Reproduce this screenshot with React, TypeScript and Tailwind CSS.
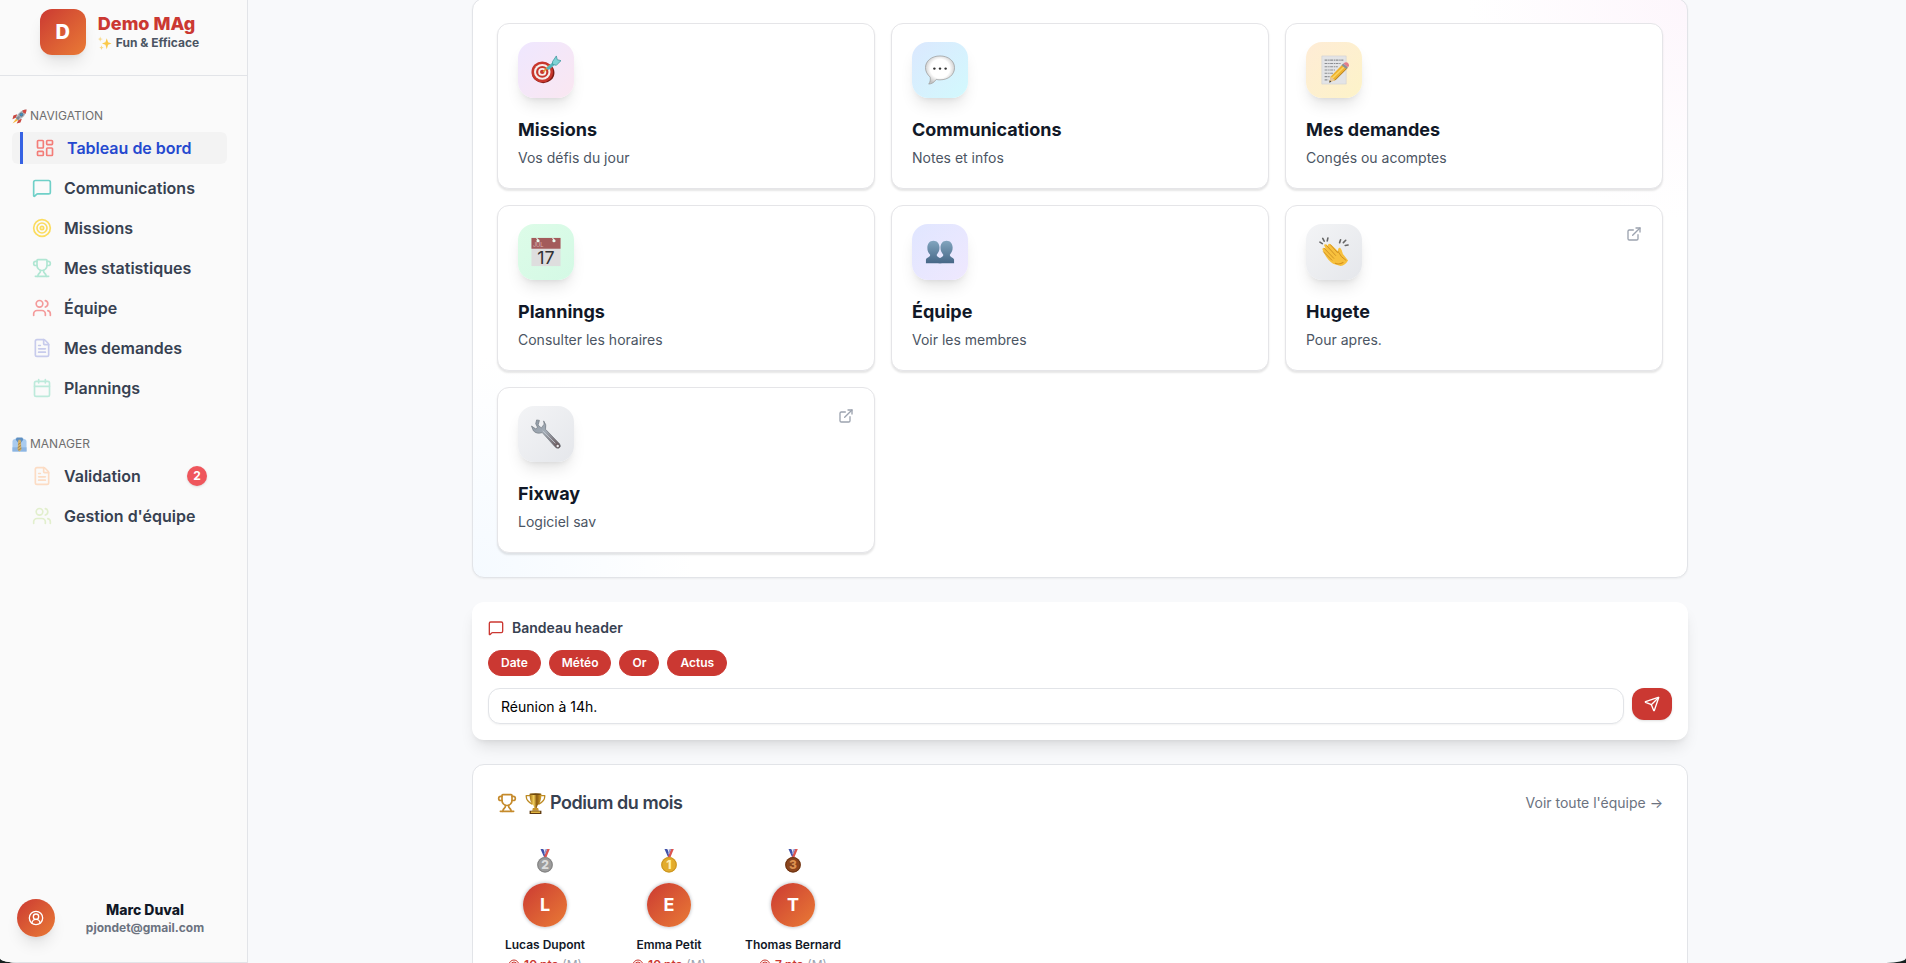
import React, { useState } from 'react';
import {
  LayoutDashboard,
  MessageSquare,
  Target,
  Trophy,
  Users,
  FileText,
  Calendar,
  ExternalLink,
  Send,
  CircleUserRound,
} from 'lucide-react';

/* --- PICTOGRAMS --- */
const Sparkles = () => (
  <svg viewBox="0 0 32 32" className="w-[14px] h-[14px] shrink-0">
    <path d="M20 5 L23 14 L31 17 L23 20 L20 30 L17 20 L9 17 L17 14 Z" fill="#fbc94a" />
    <path d="M5 1 L6.500 5.500 L11 7 L6.500 8.500 L5 13 L3.500 8.500 L0 7 L3.500 5.500 Z" fill="#f8d88a" />
    <path d="M8 21 L9.500 25 L13 26.500 L9.500 28 L8 32 L6.500 28 L3 26.500 L6.500 25 Z" fill="#f8d88a" />
  </svg>
);

const Rocket = () => (
  <svg viewBox="0 0 32 32" className="w-[15px] h-[15px] shrink-0">
    <path d="M9 20 L1 31 L13 24 Z" fill="#f6b63a" />
    <path d="M11 11 L3 14 L1 22 L9 18 Z M21 21 L18 29 L10 31 L14 23 Z" fill="#c9473f" />
    <path d="M31 1 C20 2 13 8 8 19 L13 24 C24 19 30 12 31 1 Z" fill="#aab4bd" />
    <path d="M31 1 C28 1 25 2 22 3 C23 7 25 9 29 10 C30 7 31 4 31 1 Z" fill="#d34a42" />
    <circle cx="20" cy="12" r="3.500" fill="#3d8fc4" stroke="#5c6871" strokeWidth="1.500" />
    <path d="M8 19 L13 24 L17 17 L15 15 Z" fill="#7d8790" />
  </svg>
);

const Necktie = () => (
  <svg viewBox="0 0 32 32" className="w-[15px] h-[15px] shrink-0">
    <path d="M1 9 Q1 5 6 4 L10 2 H22 L26 4 Q31 5 31 9 V31 H1 Z" fill="#a9cbef" />
    <path d="M1 22 H31 V31 H1 Z" fill="#8db5e2" />
    <path d="M10 1 H22 L24 6 L19 12 L16 7 L13 12 L8 6 Z" fill="#5e8fc2" />
    <path d="M14 6 H18 L19 10 L20 27 L16 31 L12 27 L13 10 Z" fill="#d4b168" />
    <path d="M13 16 L19 12 M12 23 L19 18 M13 28 L20 24" stroke="#8c7446" strokeWidth="1.500" />
  </svg>
);

const Dart = () => (
  <svg viewBox="0 0 32 32" className="w-[30px] h-[30px]">
    <ellipse cx="13" cy="19" rx="12" ry="11" fill="#7e1c16" />
    <ellipse cx="12" cy="18" rx="11.500" ry="11" fill="#c8372d" />
    <ellipse cx="12" cy="18" rx="8.800" ry="8.400" fill="#f6efec" />
    <ellipse cx="12" cy="18" rx="6.600" ry="6.300" fill="#c8372d" />
    <ellipse cx="12" cy="18" rx="4.300" ry="4.100" fill="#f6efec" />
    <ellipse cx="12" cy="18" rx="2.400" ry="2.300" fill="#c8372d" />
    <path d="M13 18 L20 11" stroke="#d99b2f" strokeWidth="1.600" />
    <path d="M16 14 L26 5 L28 8 L19 16 Z" fill="#56b7bd" />
    <path d="M23 7 L27 1 L28 5 L32 6 L27 11 L23 10 Z" fill="#7fd3d6" stroke="#3b949b" strokeWidth="0.800" />
  </svg>
);

const Bubble = () => (
  <svg viewBox="0 0 32 32" className="w-[30px] h-[30px]">
    <defs>
      <radialGradient id="bubble" cx="0.5" cy="0.45" r="0.55">
        <stop offset="0.6" stopColor="#ffffff" />
        <stop offset="1" stopColor="#c4c4c4" />
      </radialGradient>
    </defs>
    <path
      d="M16 1 C25 1 31.500 6.500 31.500 13.500 C31.500 21 25 26.500 16 26.500 C14.500 26.500 13 26.400 12 26 C10 29 7 31 4 31 C5.500 29 6 26.500 5.500 23.500 C2.500 21 0.500 17.500 0.500 13.500 C0.500 6.500 7 1 16 1 Z"
      fill="url(#bubble)"
      stroke="#9d9d9d"
      strokeWidth="0.800"
    />
    <circle cx="10" cy="14.500" r="1.300" fill="#333" />
    <circle cx="16" cy="14.500" r="1.300" fill="#333" />
    <circle cx="22" cy="14.500" r="1.300" fill="#333" />
  </svg>
);

const Memo = () => (
  <svg viewBox="0 0 32 32" className="w-[30px] h-[30px]">
    <path d="M3 1 H29 V31 H3 Z" fill="#e3e4e6" stroke="#cfd0d3" strokeWidth="0.600" />
    <path
      d="M6 5.500 H26 M6 9 H23 M6 12.500 H20 M6 16 H17 M6 19.500 H15 M6 23 H12 M6 26.500 H10"
      stroke="#8b8d91"
      strokeWidth="1.200"
      strokeDasharray="3 0.800 1.500 0.600"
    />
    <path d="M11 29 L12.500 23 L25 10 L30 14 L17 27 Z" fill="#eeb12f" />
    <path d="M14 25 L27.500 12" stroke="#f9d461" strokeWidth="1.800" />
    <path d="M17 27 L30 14" stroke="#a97416" strokeWidth="1" />
    <path d="M11 29 L12.500 23 L17 27 Z" fill="#e6c698" />
    <path d="M11 29.500 L11.500 27 L13 28.500 Z" fill="#333" />
    <path d="M24 11 L26 9 L31 13 L29 15 Z" fill="#8a9099" />
    <path d="M26 9 Q29 6.500 31 8.500 Q33 11 31 13 Z" fill="#e27d8a" />
  </svg>
);

const CalendarPage = () => (
  <svg viewBox="0 0 32 32" className="w-[30px] h-[30px]">
    <rect x="0.500" y="1" width="31" height="30" fill="#dedede" />
    <rect x="0.500" y="1" width="31" height="11.500" fill="#a35b5b" />
    <circle cx="7.500" cy="4" r="1.700" fill="#e8fbef" />
    <circle cx="24.500" cy="4" r="1.700" fill="#e8fbef" />
    <path d="M6 1 L8 4 M23 1 L25 4" stroke="#e8fbef" strokeWidth="1.200" />
    <text x="2" y="11" fontFamily="Inter, sans-serif" fontSize="6" fill="#dcb9b9">JUL</text>
    <text x="16" y="28.500" fontFamily="Inter, sans-serif" fontSize="19" textAnchor="middle" fill="#333">17</text>
  </svg>
);

const People = () => (
  <svg viewBox="0 0 32 32" className="w-[30px] h-[30px]">
    <defs>
      <linearGradient id="bust" x1="0" y1="0" x2="0" y2="1">
        <stop offset="0" stopColor="#82a5bf" />
        <stop offset="1" stopColor="#466787" />
      </linearGradient>
    </defs>
    <path
      d="M9 4 C13 4 15.500 7 15.500 11.500 C15.500 15 14 17 12.500 19 C12.500 22 16 21.500 17.500 24 V28 H1 V24 C2 21.500 5.500 22 5.500 19 C3.500 17 2.500 15 2.500 11.500 C2.500 7 5 4 9 4 Z"
      fill="url(#bust)"
    />
    <path
      d="M23 4 C27 4 29.500 7 29.500 11.500 C29.500 15 28 17 26.500 19 C26.500 22 30 21.500 31 24 V28 H14.500 V24 C16 21.500 19.500 22 19.500 19 C18 17 16.500 15 16.500 11.500 C16.500 7 19 4 23 4 Z"
      fill="url(#bust)"
    />
  </svg>
);

const Clap = () => (
  <svg viewBox="0 0 32 32" className="w-[30px] h-[30px]">
    <path
      d="M4 14 Q3 12 5 11.500 L7 12 L5.500 9 Q5.500 7 8 8 L9.500 9.500 Q9.500 6.500 12 7.500 L15 10 L20 15 Q20.500 11 22.500 11.500 Q25 14 25.500 18 L31 25 Q28 30 23 31 L15 28.500 Q8 24 4 14 Z"
      fill="#f7c03d"
    />
    <path d="M20 15 L24 21 L29 25 M8 9 L18 20 M5.500 12 L16 23 M12 8 L20 17 M4.500 15.500 L14 25" stroke="#c98a20" strokeWidth="0.900" fill="none" />
    <path d="M17 28 Q22 30 26 27" stroke="#d6931d" strokeWidth="1.200" fill="none" />
    <path d="M1 5.500 L3.500 7 M4 1.500 L5.500 4.500 M9.500 1 L8.800 4.200 M23 3 L22 6 M28.500 3.500 L26 6 M31 8.500 L28 9" stroke="#666" strokeWidth="1.700" strokeLinecap="round" />
  </svg>
);

const Wrench = () => (
  <svg viewBox="0 0 32 32" className="w-[30px] h-[30px]">
    <defs>
      <linearGradient id="steel" x1="0" y1="0" x2="1" y2="1">
        <stop offset="0" stopColor="#8f9aa5" />
        <stop offset="0.45" stopColor="#a2abb5" />
        <stop offset="1" stopColor="#5f4a4c" />
      </linearGradient>
    </defs>
    <path
      d="M6 1 L9 1.500 L7.500 6.500 L11 9.500 L14 5.500 L13.500 2 Q17 6 15.500 11 L30.500 26.500 Q32.500 29.500 30 31 Q27.500 32 25.500 29.500 L12 14.500 Q6 16.500 2.500 12.500 L0.500 7.500 L5 10.500 L7 9 L5 5 Z"
      fill="url(#steel)"
      stroke="#6e757d"
      strokeWidth="0.700"
    />
    <path d="M12.500 12.500 L26 26" stroke="#c3c9cf" strokeWidth="0.900" />
    <circle cx="28.500" cy="28.800" r="1.300" fill="#ececee" />
  </svg>
);

const GoldCup = () => (
  <svg viewBox="0 0 32 32" className="w-[21px] h-[21px] shrink-0">
    <defs>
      <linearGradient id="cup" x1="0" y1="0" x2="1" y2="0">
        <stop offset="0" stopColor="#a06c12" />
        <stop offset="0.35" stopColor="#f3cf5a" />
        <stop offset="0.6" stopColor="#8a5a10" />
        <stop offset="1" stopColor="#d9a52e" />
      </linearGradient>
    </defs>
    <path d="M8 4 H2 Q1 12 11 17 M24 4 H30 Q31 12 21 17" fill="none" stroke="#bd8a22" strokeWidth="2" />
    <path d="M7 1 H25 Q25 15 19 19 L17.500 24 H14.500 L13 19 Q7 15 7 1 Z" fill="url(#cup)" />
    <ellipse cx="16" cy="1.800" rx="9" ry="1.300" fill="#70480c" />
    <path d="M12 23 H20 L21 27 H11 Z" fill="#c8932a" />
    <path d="M7 27 H25 V32 H7 Z" fill="#5f3a10" />
    <path d="M9 28 H23 V30.500 H9 Z" fill="#e0b440" />
  </svg>
);

const Medal = ({ rank }: { rank: number }) => {
  const tones: Record<number, string[]> = {
    1: ['#e3ac2c', '#c99422', '#fff0b0'],
    2: ['#9c9c9c', '#828282', '#dddddd'],
    3: ['#8c451d', '#6b3413', '#dc9150'],
  };
  const [fill, edge, digit] = tones[rank];
  return (
    <svg viewBox="0 0 24 24" className="w-6 h-6" role="img" aria-label={`Rang ${rank}`}>
      <path d="M7.500 0 H10.500 L13.500 8 H11 Z" fill="#3f50a8" />
      <path d="M10.500 0 H13.500 L12 4.500 Z" fill="#e9e9f2" />
      <path d="M14 0 H16.800 L13.500 8 H11 Z" fill="#dc5550" />
      <path d="M12.700 0 H14.200 L11.700 6 L10.900 4.500 Z" fill="#8d95d0" />
      <circle cx="12" cy="15.800" r="7.800" fill={fill} />
      <circle cx="12" cy="15.800" r="7.200" fill="none" stroke={edge} strokeWidth="1" />
      <text x="12" y="20" fontFamily="Inter, sans-serif" fontSize="12" fontWeight="800" textAnchor="middle" fill={digit}>
        {rank}
      </text>
    </svg>
  );
};

/* --- DATA --- */
const navigation = [
  { label: 'Tableau de bord', icon: LayoutDashboard, color: 'text-[#f37d78]', active: true },
  { label: 'Communications', icon: MessageSquare, color: 'text-[#6fd0c8]' },
  { label: 'Missions', icon: Target, color: 'text-[#fbdc5f]' },
  { label: 'Mes statistiques', icon: Trophy, color: 'text-[#b0e6d3]' },
  { label: 'Équipe', icon: Users, color: 'text-[#f49a9a]' },
  { label: 'Mes demandes', icon: FileText, color: 'text-[#c7cbec]' },
  { label: 'Plannings', icon: Calendar, color: 'text-[#bdeadb]' },
];

const manager = [
  { label: 'Validation', icon: FileText, color: 'text-[#fcdcc4]', count: 2 },
  { label: "Gestion d'équipe", icon: Users, color: 'text-[#e2efcd]' },
];

const shortcuts = [
  { title: 'Missions', text: 'Vos défis du jour', art: <Dart />, tone: 'from-[#efe7ff] to-[#fae7f1]' },
  { title: 'Communications', text: 'Notes et infos', art: <Bubble />, tone: 'from-[#dbe8fe] to-[#d2f9fd]' },
  { title: 'Mes demandes', text: 'Congés ou acomptes', art: <Memo />, tone: 'from-[#feecd6] to-[#fdf3c8]' },
  { title: 'Plannings', text: 'Consulter les horaires', art: <CalendarPage />, tone: 'from-[#ddfce8] to-[#d4f9e5]' },
  { title: 'Équipe', text: 'Voir les membres', art: <People />, tone: 'from-[#e0e6ff] to-[#efe8fe]' },
  { title: 'Hugete', text: 'Pour apres.', art: <Clap />, tone: 'from-[#f3f4f6] to-[#e5e7eb]', external: true },
  { title: 'Fixway', text: 'Logiciel sav', art: <Wrench />, tone: 'from-[#f3f4f6] to-[#e5e7eb]', external: true },
];

const podium = [
  { name: 'Lucas Dupont', rank: 2, points: 10 },
  { name: 'Emma Petit', rank: 1, points: 10 },
  { name: 'Thomas Bernard', rank: 3, points: 7 },
];

/* --- SIDEBAR --- */
const NavItem = ({ item }: { item: any }) => {
  const Icon = item.icon;
  return (
    <li className={`h-8 rounded-md px-2 ${item.active ? 'bg-[#f3f3f3]' : ''}`}>
      <a
        href="#"
        className={`flex h-full items-center gap-3 px-3 text-base font-semibold ${
          item.active ? 'border-l-[3px] border-[#3662e3] text-[#2549cf]' : 'text-[#374151]'
        }`}
      >
        <Icon size={20} className={item.color} />
        <span className="flex-1 whitespace-nowrap">{item.label}</span>
        {item.count && (
          <span className="flex h-5 w-5 items-center justify-center rounded-full bg-[#ef565c] text-xs font-bold text-white shadow-sm">
            {item.count}
          </span>
        )}
      </a>
    </li>
  );
};

const Sidebar = () => (
  <aside className="flex w-62 shrink-0 flex-col border-r border-b border-[#e2e4e8] bg-[#fafafa]">
    <div className="flex h-19 items-start justify-center gap-3 border-b border-[#e2e4e8] pt-[9px] pr-2">
      <div className="flex h-[46px] w-[46px] items-center justify-center rounded-xl bg-linear-to-br from-[#cb3832] to-[#e97a35] text-xl font-extrabold text-white shadow-lg">
        D
      </div>
      <div className="pt-1">
        <h1 className="text-lg leading-[22px] font-extrabold text-[#cb3832]">Demo MAg</h1>
        <p className="flex items-center gap-1 text-xs font-bold text-[#4b5563]">
          <Sparkles />
          Fun &amp; Efficace
        </p>
      </div>
    </div>

    <nav className="flex-1 pt-8 pr-5 pl-3">
      <h2 className="flex h-4 items-center gap-[3px] text-xs text-[#6f6f6f]">
        <Rocket />
        NAVIGATION
      </h2>
      <ul className="mt-2 space-y-2">
        {navigation.map((item) => (
          <NavItem key={item.label} item={item} />
        ))}
      </ul>
      <h2 className="mt-8 flex h-4 items-center gap-[3px] text-xs text-[#6f6f6f]">
        <Necktie />
        MANAGER
      </h2>
      <ul className="mt-2 space-y-2">
        {manager.map((item) => (
          <NavItem key={item.label} item={item} />
        ))}
      </ul>
    </nav>

    <div className="flex items-center pr-3 pb-[25px] pl-[17px]">
      <div className="flex h-[38px] w-[38px] items-center justify-center rounded-full bg-linear-to-br from-[#cb3832] to-[#e97a35] text-white shadow-lg">
        <CircleUserRound size={16} />
      </div>
      <div className="flex-1 text-center">
        <p className="text-sm leading-5 font-extrabold text-[#111827]">Marc Duval</p>
        <p className="text-xs font-bold text-[#6b7280]">pjondet@gmail.com</p>
      </div>
    </div>
  </aside>
);

/* --- SHORTCUT CARDS --- */
const Shortcuts = () => (
  <section className="rounded-xl border border-[#e2e4e8] bg-white bg-[radial-gradient(circle_at_100%_0%,#fdf6fc_0,transparent_220px),radial-gradient(circle_at_0%_100%,#f5faff_0,transparent_220px)] p-6 shadow-xs">
    <div className="grid grid-cols-3 gap-4">
      {shortcuts.map((card) => (
        <a
          key={card.title}
          href="#"
          className="flex items-start justify-between rounded-xl border border-[#e5e5e8] bg-white px-5 pt-[18px] pb-5 shadow-[0_2px_2px_rgba(0,0,0,0.1)]"
        >
          <div>
            <div className={`flex h-14 w-14 items-center justify-center rounded-2xl bg-linear-to-br shadow-lg ${card.tone}`}>
              {card.art}
            </div>
            <h3 className="mt-[18px] text-lg leading-7 font-bold text-[#111827]">{card.title}</h3>
            <p className="mt-1 text-sm text-[#4b5563]">{card.text}</p>
          </div>
          {card.external && <ExternalLink size={16} className="mt-0.5 text-[#9ca3af]" />}
        </a>
      ))}
    </div>
  </section>
);

/* --- HEADER BANNER SETTINGS --- */
const Banner = () => {
  const [message, setMessage] = useState('Réunion à 14h.');
  return (
    <section className="rounded-xl bg-white p-4 shadow-lg">
      <label htmlFor="banner" className="flex items-center gap-2 text-sm font-semibold text-[#374151]">
        <MessageSquare size={16} className="text-[#cb3832]" />
        Bandeau header
      </label>
      <div className="mt-3 flex gap-2">
        {['Date', 'Météo', 'Or', 'Actus'].map((chip) => (
          <button key={chip} className="rounded-full border border-[#cb3832] bg-[#cb3832] px-3 py-1 text-xs font-semibold text-white">
            {chip}
          </button>
        ))}
      </div>
      <div className="mt-3 flex items-start gap-2">
        <input
          id="banner"
          type="text"
          value={message}
          onChange={(e) => setMessage(e.target.value)}
          className="h-9 flex-1 rounded-xl border border-[#e2e4e8] bg-white px-3 text-sm text-black shadow-xs"
        />
        <button aria-label="Envoyer" className="flex h-8 w-10 items-center justify-center rounded-xl bg-[#cb3832] text-white shadow-sm">
          <Send size={16} />
        </button>
      </div>
    </section>
  );
};

/* --- PODIUM --- */
const Podium = () => (
  <section className="rounded-xl border border-[#e2e4e8] bg-white p-6">
    <div className="flex items-center justify-between">
      <h2 className="flex items-center gap-2 text-lg leading-7 font-semibold tracking-tight text-[#374151]">
        <Trophy size={20} className="text-[#c58a2b]" />
        <span className="flex items-center gap-1">
          <GoldCup />
          Podium du mois
        </span>
      </h2>
      <a href="#" className="text-sm text-[#6b7280]">
        Voir toute l'équipe →
      </a>
    </div>
    <div className="mt-8 flex gap-7">
      {podium.map((person) => (
        <div key={person.name} className="flex w-24 flex-col items-center">
          <Medal rank={person.rank} />
          <div className="mt-2.5 flex h-11 w-11 items-center justify-center rounded-full bg-linear-to-br from-[#cb3832] to-[#e97a35] text-lg font-bold text-white shadow-[0_0_3px_1px_rgba(60,70,90,0.25)]">
            {person.name[0]}
          </div>
          <p className="mt-2.5 text-xs font-semibold whitespace-nowrap text-[#111827]">{person.name}</p>
          <p className="mt-1 flex items-center gap-1 text-xs font-semibold text-[#cb3832]">
            <Target size={12} />
            {person.points} pts
            <span className="font-normal text-[#9ca3af]">(M)</span>
          </p>
        </div>
      ))}
    </div>
  </section>
);

const App = () => (
  <div className="h-screen overflow-hidden bg-[#16211f] font-[Inter,sans-serif]">
    <div className="flex h-full overflow-hidden rounded-b-[20px_5px] bg-[#f8f9fb]">
      <Sidebar />
      <main className="-mt-0.5 min-w-0 flex-1 pr-8 pl-[38px]">
        <div className="mx-auto flex max-w-[1216px] flex-col gap-6">
          <Shortcuts />
          <Banner />
          <Podium />
        </div>
      </main>
    </div>
  </div>
);

export default App;
